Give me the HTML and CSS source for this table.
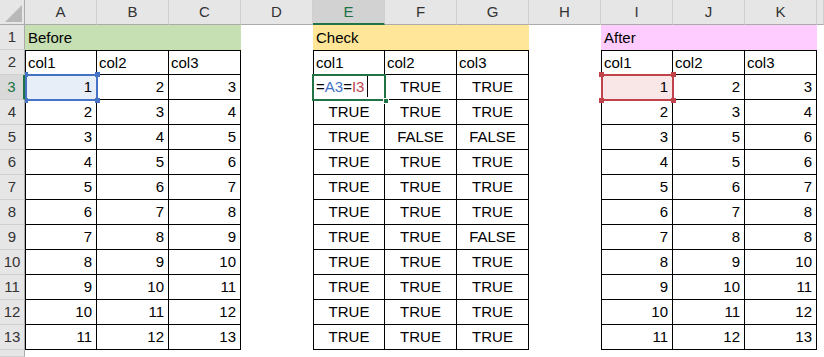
FILE: index.html
```html
<!DOCTYPE html>
<html lang="ja">
<head>
    <meta charset="UTF-8">
    <title>Sheet1</title>
    <link rel="stylesheet" href="styles.css">
</head>
<body>

    <div class="sheet">
        <!-- Top-left select-all box -->
        <div class="corner"></div>

        <!-- Column letters -->
        <div class="col-heads">
            <div class="col-head">A</div>
            <div class="col-head">B</div>
            <div class="col-head">C</div>
            <div class="col-head">D</div>
            <div class="col-head selected">E</div>
            <div class="col-head">F</div>
            <div class="col-head">G</div>
            <div class="col-head">H</div>
            <div class="col-head">I</div>
            <div class="col-head">J</div>
            <div class="col-head">K</div>
            <div class="col-head filler"></div>
        </div>

        <!-- Row numbers -->
        <div class="row-heads">
            <div class="row-head">1</div>
            <div class="row-head">2</div>
            <div class="row-head selected">3</div>
            <div class="row-head">4</div>
            <div class="row-head">5</div>
            <div class="row-head">6</div>
            <div class="row-head">7</div>
            <div class="row-head">8</div>
            <div class="row-head">9</div>
            <div class="row-head">10</div>
            <div class="row-head">11</div>
            <div class="row-head">12</div>
            <div class="row-head">13</div>
            <div class="row-head filler"></div>
        </div>

        <div class="cells">

            <!-- A1:C13 -->
            <div class="block block-before">
                <div class="title before">Before</div>
                <div class="cell">col1</div><div class="cell">col2</div><div class="cell">col3</div>
                <div class="cell num ref ref-blue">1<span class="handle tl"></span><span class="handle tr"></span><span class="handle bl"></span><span class="handle br"></span></div><div class="cell num">2</div><div class="cell num">3</div>
                <div class="cell num">2</div><div class="cell num">3</div><div class="cell num">4</div>
                <div class="cell num">3</div><div class="cell num">4</div><div class="cell num">5</div>
                <div class="cell num">4</div><div class="cell num">5</div><div class="cell num">6</div>
                <div class="cell num">5</div><div class="cell num">6</div><div class="cell num">7</div>
                <div class="cell num">6</div><div class="cell num">7</div><div class="cell num">8</div>
                <div class="cell num">7</div><div class="cell num">8</div><div class="cell num">9</div>
                <div class="cell num">8</div><div class="cell num">9</div><div class="cell num">10</div>
                <div class="cell num">9</div><div class="cell num">10</div><div class="cell num">11</div>
                <div class="cell num">10</div><div class="cell num">11</div><div class="cell num">12</div>
                <div class="cell num">11</div><div class="cell num">12</div><div class="cell num">13</div>
            </div>

            <!-- E1:G13 -->
            <div class="block block-check">
                <div class="title check">Check</div>
                <div class="cell">col1</div><div class="cell">col2</div><div class="cell">col3</div>
                <div class="cell active">=<span class="f-blue">A3</span>=<span class="f-red">I3</span><span class="caret"></span><span class="fill-handle"></span></div><div class="cell bool">TRUE</div><div class="cell bool">TRUE</div>
                <div class="cell bool">TRUE</div><div class="cell bool">TRUE</div><div class="cell bool">TRUE</div>
                <div class="cell bool">TRUE</div><div class="cell bool">FALSE</div><div class="cell bool">FALSE</div>
                <div class="cell bool">TRUE</div><div class="cell bool">TRUE</div><div class="cell bool">TRUE</div>
                <div class="cell bool">TRUE</div><div class="cell bool">TRUE</div><div class="cell bool">TRUE</div>
                <div class="cell bool">TRUE</div><div class="cell bool">TRUE</div><div class="cell bool">TRUE</div>
                <div class="cell bool">TRUE</div><div class="cell bool">TRUE</div><div class="cell bool">FALSE</div>
                <div class="cell bool">TRUE</div><div class="cell bool">TRUE</div><div class="cell bool">TRUE</div>
                <div class="cell bool">TRUE</div><div class="cell bool">TRUE</div><div class="cell bool">TRUE</div>
                <div class="cell bool">TRUE</div><div class="cell bool">TRUE</div><div class="cell bool">TRUE</div>
                <div class="cell bool">TRUE</div><div class="cell bool">TRUE</div><div class="cell bool">TRUE</div>
            </div>

            <!-- I1:K13 -->
            <div class="block block-after">
                <div class="title after">After</div>
                <div class="cell">col1</div><div class="cell">col2</div><div class="cell">col3</div>
                <div class="cell num ref ref-red">1<span class="handle tl"></span><span class="handle tr"></span><span class="handle bl"></span><span class="handle br"></span></div><div class="cell num">2</div><div class="cell num">3</div>
                <div class="cell num">2</div><div class="cell num">3</div><div class="cell num">4</div>
                <div class="cell num">3</div><div class="cell num">5</div><div class="cell num">6</div>
                <div class="cell num">4</div><div class="cell num">5</div><div class="cell num">6</div>
                <div class="cell num">5</div><div class="cell num">6</div><div class="cell num">7</div>
                <div class="cell num">6</div><div class="cell num">7</div><div class="cell num">8</div>
                <div class="cell num">7</div><div class="cell num">8</div><div class="cell num">8</div>
                <div class="cell num">8</div><div class="cell num">9</div><div class="cell num">10</div>
                <div class="cell num">9</div><div class="cell num">10</div><div class="cell num">11</div>
                <div class="cell num">10</div><div class="cell num">11</div><div class="cell num">12</div>
                <div class="cell num">11</div><div class="cell num">12</div><div class="cell num">13</div>
            </div>

        </div>
    </div>

</body>
</html>
```

FILE: styles.css
```css
/* Page */
html, body {
    margin: 0;
    height: 100%;
    overflow: hidden;
    background-color: #fff;
    font-family: "Liberation Sans", Arial, sans-serif;
    font-size: 15px;
    color: #000;
}

* {
    box-sizing: border-box;
}

/* Sheet frame: corner, letters, numbers, cells */
.sheet {
    display: grid;
    grid-template-columns: 25px 1fr;
    grid-template-rows: 25px 1fr;
    height: 100%;
}

.corner {
    position: relative;
    background-color: #e6e6e6;
    border-right: 1px solid #ababab;
    border-bottom: 1px solid #ababab;
}

.corner::after {
    content: "";
    position: absolute;
    left: 5px;
    top: 5px;
    width: 17px;
    height: 17px;
    background-color: #b8b8b8;
    clip-path: polygon(100% 0, 100% 100%, 0 100%);
}

/* Column letters */
.col-heads {
    display: flex;
}

.col-head {
    flex: 0 0 72px;
    height: 25px;
    line-height: 24px;
    text-align: center;
    background-color: #e6e6e6;
    color: #333;
    border-right: 1px solid #d0d0d0;
    border-bottom: 1px solid #ababab;
}

.col-head.filler {
    flex: 1;
}

.col-head.selected {
    background-color: #d2d2d2;
    color: #217346;
    border-bottom: 2px solid #217346;
}

/* Row numbers */
.row-heads {
    display: flex;
    flex-direction: column;
}

.row-head {
    flex: 0 0 25px;
    line-height: 24px;
    text-align: center;
    background-color: #e6e6e6;
    color: #333;
    border-right: 1px solid #ababab;
    border-bottom: 1px solid #d0d0d0;
}

.row-head.filler {
    flex: 1;
}

.row-head.selected {
    background-color: #d9d9d9;
    color: #217346;
    border-right: 2px solid #217346;
}

/* Cell area (gridlines hidden) */
.cells {
    display: grid;
    grid-template-columns: repeat(11, 72px) 1fr;
    grid-template-rows: repeat(13, 25px);
    overflow: hidden;
}

.block {
    display: grid;
    grid-template-columns: repeat(3, 72px);
    grid-template-rows: repeat(13, 25px);
    grid-row: 1 / span 13;
}

.block-before { grid-column: 1 / span 3; }
.block-check  { grid-column: 5 / span 3; }
.block-after  { grid-column: 9 / span 3; }

/* Merged title row */
.title {
    grid-column: 1 / span 3;
    line-height: 25px;
    padding-left: 3px;
}

.title.before { background-color: #c6e0b4; }
.title.check  { background-color: #ffe699; }
.title.after  { background-color: #ffccff; }

/* Bordered table cells */
.cell {
    position: relative;
    line-height: 24px;
    padding: 0 2px;
    white-space: nowrap;
    border-right: 1px solid #000;
    border-bottom: 1px solid #000;
}

.block .cell:nth-child(3n+2) {
    border-left: 1px solid #000;
}

.block .cell:nth-child(-n+4) {
    border-top: 1px solid #000;
    line-height: 23px;
}

.cell.num {
    text-align: right;
    padding-right: 4px;
}

.cell.bool {
    text-align: center;
}

/* Formula reference boxes */
.ref::after,
.active::after {
    content: "";
    position: absolute;
    top: -1px;
    left: -1px;
    right: -2px;
    bottom: -2px;
    border: 2px solid;
    z-index: 1;
}

.ref-blue {
    background-color: #e8eef8;
    color: #000;
}

.ref-blue::after {
    border-color: #4472c4;
}

.ref-red {
    background-color: #f9e7e8;
}

.ref-red::after {
    border-color: #c0434b;
}

.handle {
    position: absolute;
    width: 5px;
    height: 5px;
    z-index: 2;
}

.ref-blue .handle { background-color: #4472c4; }
.ref-red .handle  { background-color: #c0434b; }

.handle.tl { left: -3px;  top: -3px; }
.handle.tr { right: -4px; top: -3px; }
.handle.bl { left: -3px;  bottom: -4px; }
.handle.br { right: -4px; bottom: -4px; }

/* Cell being edited */
.active {
    padding-left: 2px;
}

.active::after {
    left: -2px;
    border-color: #217346;
}

.f-blue { color: #4472c4; }
.f-red  { color: #c0434b; }

.caret {
    display: inline-block;
    width: 1px;
    height: 22px;
    margin-left: 3px;
    vertical-align: top;
    background-color: #000;
}

.fill-handle {
    position: absolute;
    right: -5px;
    bottom: -5px;
    width: 6px;
    height: 6px;
    background-color: #217346;
    border: 1px solid #fff;
    z-index: 2;
}
```
